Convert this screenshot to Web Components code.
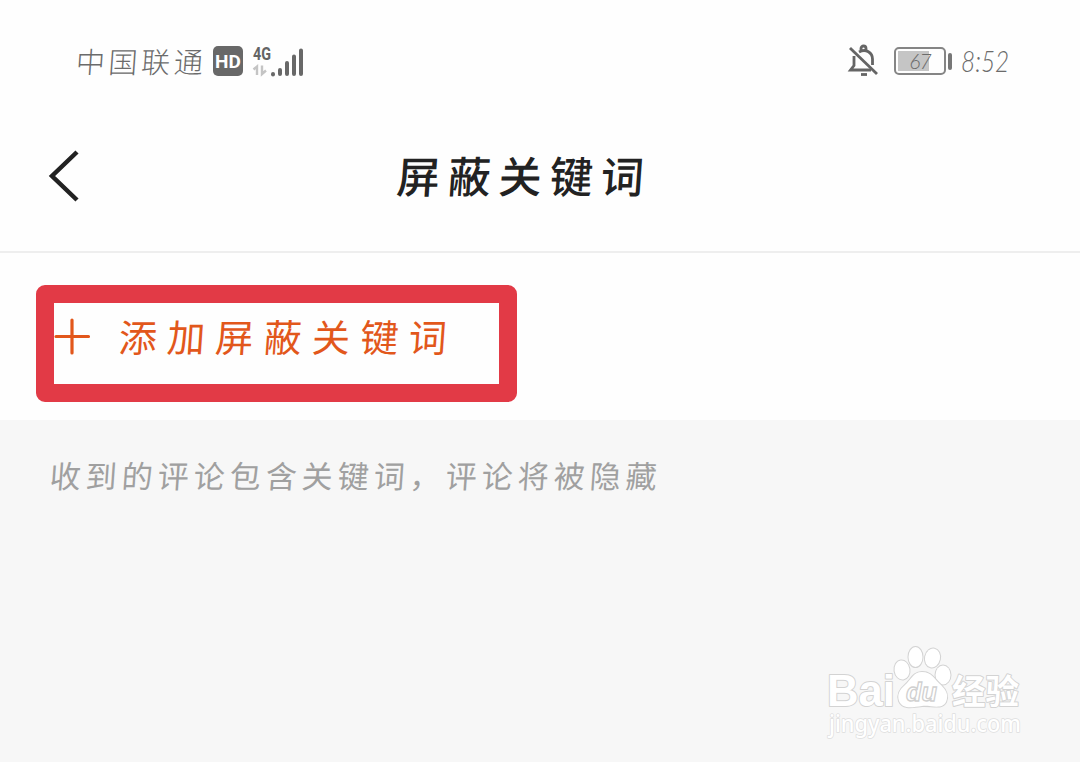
<!DOCTYPE html>
<html lang="zh-CN">
<head>
<meta charset="utf-8">
<title>屏蔽关键词</title>
<style>
  body {
    margin: 0;
    width: 1080px;
    height: 762px;
    overflow: hidden;
    background: #fefefe;
    font-family: "Noto Sans CJK SC", sans-serif;
  }
</style>
</head>
<body>
<keyword-page></keyword-page>

<script>
class StatusBar extends HTMLElement {
  constructor() {
    super();
    this.attachShadow({ mode: "open" });
    this.shadowRoot.innerHTML = `
      <style>
        :host {
          display: flex;
          align-items: center;
          justify-content: space-between;
          box-sizing: border-box;
          height: 122px;
          padding: 0 71px 0 76px;
          color: #6b6b6b;
          font-weight: 300;
        }

        .group {
          display: flex;
          align-items: center;
        }

        .carrier {
          width: 137px;
          padding-bottom: 2px;
          font-size: 29px;
          letter-spacing: 3.7px;
          line-height: 40px;
          white-space: nowrap;
          transform: skewX(-4deg);
        }

        .hd {
          width: 30px;
          height: 30px;
          border-radius: 5px;
          background: #686868;
          color: #fff;
          font: bold 19px/31px Roboto, sans-serif;
          text-align: center;
        }

        .net {
          margin-left: 9px;
        }

        .battery {
          display: flex;
          align-items: center;
          margin: 0 9px 0 15px;
        }

        .cell {
          box-sizing: border-box;
          width: 52px;
          height: 28px;
          border: 2px solid #858585;
          border-radius: 5px;
          background: linear-gradient(#c5c5c5, #c5c5c5) 2px 2px / 31px 20px no-repeat;
          font: italic 300 21px/23px Lato, sans-serif;
          letter-spacing: -1px;
          text-align: center;
        }

        .cap {
          width: 4px;
          height: 17px;
          margin-left: 2px;
          border-radius: 2px;
          background: #777;
        }

        .time {
          width: 48px;
          font: italic 300 29px/34px Lato, sans-serif;
          white-space: nowrap;
          transform: scaleX(0.84);
          transform-origin: left;
        }
      </style>

      <div class="group">
        <span class="carrier">中国联通</span>
        <span class="hd">HD</span>
        <svg class="net" width="54" height="38" viewBox="0 0 54 38">
          <text x="1" y="18" font-family="Roboto" font-size="19" font-weight="700" textLength="18" lengthAdjust="spacingAndGlyphs" fill="#646464">4G</text>
          <path d="M1.500 27.500L5 24.500V33M10 23.500V32L14 28.500" fill="none" stroke="#c4c4c4" stroke-width="2.400"/>
          <path d="M21 32v.500M28 28v4M35 21v11M42 14.500v17.500M49 8.500v23.500" stroke="#686868" stroke-width="4" stroke-linecap="round"/>
        </svg>
      </div>
      <div class="group">
        <svg width="32" height="34" viewBox="0 0 32 34" fill="none" stroke="#656565" stroke-width="2.800">
          <path d="M3 4L30 30"/>
          <path d="M14 6V4.500a2.500 2.500 0 0 1 5 0V6M12 8c7-4 13.500 1 13.500 7v6M7 12v9.500L3.500 26H24"/>
          <path d="M14 30.500h6"/>
        </svg>
        <div class="battery">
          <div class="cell">67</div>
          <div class="cap"></div>
        </div>
        <span class="time">8:52</span>
      </div>
    `;
  }
}

class NavBar extends HTMLElement {
  constructor() {
    super();
    this.attachShadow({ mode: "open" });
    this.shadowRoot.innerHTML = `
      <style>
        :host {
          display: flex;
          align-items: center;
          box-sizing: border-box;
          height: 131px;
          padding: 0 0 21px 48px;
          border-bottom: 2px solid #eee;
          color: #222;
        }

        svg {
          display: block;
        }

        .title {
          margin-left: 317px;
          padding-bottom: 4px;
          font-size: 43px;
          font-weight: 500;
          letter-spacing: 8px;
          line-height: 60px;
          transform: skewX(-4deg);
        }
      </style>

      <svg width="32" height="54" viewBox="0 0 32 54">
        <path d="M29 3L4 27L29 51" fill="none" stroke="#222" stroke-width="4.500"/>
      </svg>
      <span class="title"><slot></slot></span>
    `;
  }
}

class AddKeyword extends HTMLElement {
  constructor() {
    super();
    this.attachShadow({ mode: "open" });
    this.shadowRoot.innerHTML = `
      <style>
        :host {
          display: flex;
          align-items: center;
          position: relative;
          box-sizing: border-box;
          height: 167px;
          padding-left: 54px;
          color: #e2571b;
        }

        svg {
          flex: none;
          margin-right: 28px;
        }

        .label {
          padding-bottom: 2px;
          font-size: 38px;
          font-weight: 400;
          letter-spacing: 10.3px;
          line-height: 54px;
          transform: skewX(-4deg);
        }

        /* marker frame lies over the row */
        .frame {
          position: absolute;
          left: 36px;
          top: 32px;
          box-sizing: border-box;
          width: 481px;
          height: 117px;
          border: 18px solid #e23a46;
          border-radius: 9px;
        }
      </style>

      <svg width="37" height="37" viewBox="0 0 37 37">
        <path d="M2 18.500H34.500M18 2V35" stroke="#e2571b" stroke-width="3.200" stroke-linecap="round"/>
      </svg>
      <span class="label"><slot></slot></span>
      <div class="frame"></div>
    `;
  }
}

class HintPanel extends HTMLElement {
  constructor() {
    super();
    this.attachShadow({ mode: "open" });
    this.shadowRoot.innerHTML = `
      <style>
        :host {
          display: block;
          box-sizing: border-box;
          height: 342px;
          padding: 31px 0 0 50px;
          background: #f7f7f7;
          color: #a0a0a0;
          font-size: 31px;
          font-weight: 400;
          letter-spacing: 5px;
          line-height: 48px;
          white-space: nowrap;
        }

        .text {
          display: inline-block;
          transform: skewX(-4deg);
        }
      </style>

      <span class="text"><slot></slot></span>
    `;
  }
}

class SiteWatermark extends HTMLElement {
  constructor() {
    super();
    this.attachShadow({ mode: "open" });
    this.shadowRoot.innerHTML = `
      <style>
        :host {
          display: block;
          position: absolute;
          left: 815px;
          top: 635px;
        }

        svg {
          display: block;
          overflow: visible;
        }

        .mark {
          fill: #fff;
          stroke: #d3d3d3;
          stroke-width: 2;
          paint-order: stroke;
          stroke-linejoin: round;
        }
      </style>

      <svg width="220" height="115" viewBox="0 0 220 115">
        <g class="mark">
          <text x="12" y="71" font-family="Liberation Sans" font-size="45" font-weight="700" textLength="68" lengthAdjust="spacingAndGlyphs">Bai</text>
          <ellipse cx="87" cy="35" rx="7.500" ry="9.500" transform="rotate(-8 87 35)"/>
          <ellipse cx="100.500" cy="22" rx="7" ry="10"/>
          <ellipse cx="117.500" cy="23" rx="7.500" ry="9.500" transform="rotate(12 117.500 23)"/>
          <ellipse cx="128" cy="40" rx="7.500" ry="9.500"/>
          <path d="M107 37c-9 0-11 8-17 13c-6 5-8 10-6 16c4 9 14 6 23 5s20 4 24-4c3-7 0-12-5-17c-7-6-9-13-19-13z"/>
          <text x="137" y="69" font-family="Noto Sans CJK SC" font-size="34" font-weight="700" textLength="67" lengthAdjust="spacingAndGlyphs">经验</text>
          <text x="14" y="97" font-family="Noto Sans" font-size="23" font-weight="500" stroke="#dedede" stroke-width="1.500" textLength="192" lengthAdjust="spacingAndGlyphs">jingyan.baidu.com</text>
        </g>
        <text x="91" y="66" font-family="Liberation Sans" font-size="26" font-style="italic" font-weight="700" fill="#fff" stroke="#d0d0d0" stroke-width="1.300" textLength="31" lengthAdjust="spacingAndGlyphs">du</text>
      </svg>
    `;
  }
}

class KeywordPage extends HTMLElement {
  constructor() {
    super();
    this.attachShadow({ mode: "open" });
    this.shadowRoot.innerHTML = `
      <style>
        :host {
          display: flex;
          flex-direction: column;
          position: relative;
          width: 1080px;
          height: 762px;
        }
      </style>

      <status-bar></status-bar>
      <nav-bar>屏蔽关键词</nav-bar>
      <add-keyword>添加屏蔽关键词</add-keyword>
      <hint-panel>收到的评论包含关键词，评论将被隐藏</hint-panel>
      <site-watermark></site-watermark>
    `;
  }
}

customElements.define("status-bar", StatusBar);
customElements.define("nav-bar", NavBar);
customElements.define("add-keyword", AddKeyword);
customElements.define("hint-panel", HintPanel);
customElements.define("site-watermark", SiteWatermark);
customElements.define("keyword-page", KeywordPage);
</script>
</body>
</html>
